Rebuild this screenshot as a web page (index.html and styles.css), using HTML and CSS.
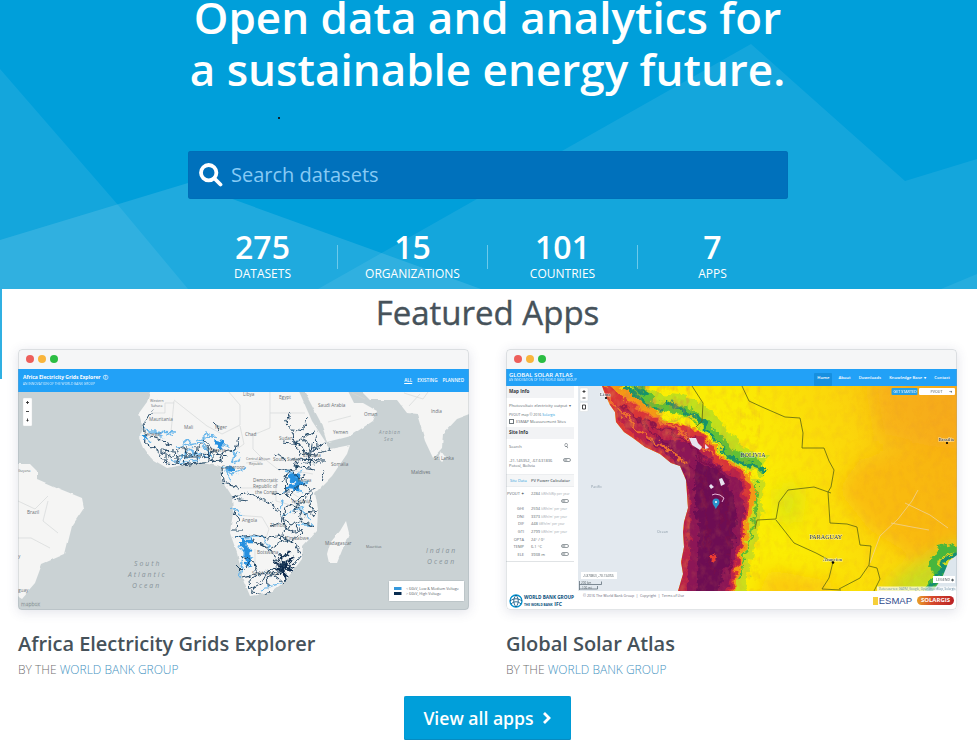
FILE: index.html
```html
<!DOCTYPE html>
<html lang="en">
<head>
<meta charset="utf-8">
<title>Open data and analytics for a sustainable energy future</title>
<link rel="stylesheet" href="styles.css">
</head>
<body>
<header class="hero">
  <svg class="hero-bg" viewBox="0 0 977 289" aria-hidden="true">
    <path class="facet" d="M0 69L118 205 188 289H0z"/>
    <path class="facet facet-b" d="M0 240L188 183 481 289H0z"/>
    <path class="facet" d="M751 44L318 289H977V159L905 181z"/>
    <path class="facet" d="M941 289L977 274V289z"/>
  </svg>
  <i class="speck"></i>
  <h1>Open data and analytics for<br>a sustainable energy future.</h1>
  <div class="search">
    <svg viewBox="0 0 24 24" width="24" height="24"><circle cx="9.7" cy="9.7" r="7.7"/><path d="M15.5 15.5l6 6"/></svg>
    <span>Search datasets</span>
  </div>
  <ul class="stats">
    <li><b>275</b><span>DATASETS</span></li>
    <li><b>15</b><span>ORGANIZATIONS</span></li>
    <li><b>101</b><span>COUNTRIES</span></li>
    <li><b>7</b><span>APPS</span></li>
  </ul>
</header>
<main>
  <h2>Featured Apps</h2>
  <div class="apps">
    <article>
      <div class="window">
        <div class="chrome"><i class="red"></i><i class="amber"></i><i class="green"></i></div>
        <div class="grid-head">
          <div class="brand"><b>Africa Electricity Grids Explorer &nbsp;ⓘ</b><span>AN INNOVATION OF THE WORLD BANK GROUP</span></div>
          <nav><u>ALL</u><span>EXISTING</span><span>PLANNED</span></nav>
        </div>
        <svg class="map" viewBox="18 391 451 218" width="451" height="218">
          <defs>
            <filter id="rough" x="-5%" y="-5%" width="110%" height="110%"><feTurbulence type="fractalNoise" baseFrequency=".17" numOctaves="3" seed="4"/><feDisplacementMap in="SourceGraphic" scale="7" xChannelSelector="R" yChannelSelector="G"/></filter>
            <filter id="coast"><feTurbulence type="fractalNoise" baseFrequency=".1" numOctaves="2" seed="7"/><feDisplacementMap in="SourceGraphic" scale="3" xChannelSelector="R" yChannelSelector="G"/></filter>
          </defs>
          <rect x="18" y="391" width="451" height="218" fill="#cad2d4"/>
          <g class="land" filter="url(#coast)">
            <path d="M151 388L147 401 139 412 143 428 139 437 143 447 150 457 167 467 177 465 203 461 213 463 223 466 221 478 232 495 233 512 230 532 237 552 243 578 250 595 270 592 283 582 293 570 302 558 303 545 317 530 318 508 315 492 332 475 347 453 350 444 330 448 325 440 312 420 298 388z"/>
            <path d="M303 388L320 420 327 441 350 435 373 420 377 410 363 402 354 402 347 388zM359 388L370 399 397 399 407 412 417 413 425 440 433 457 442 447 443 433 457 418 473 412V388z"/>
            <path d="M14 463H30L37 470 37 478 60 488 82 497 84 507 72 525 65 553 42 563 35 582 22 597 14 592zM346 520L349 532 337 562 329 562 327 553 330 542 340 530zM441 450L446 457 442 461 438 457z"/>
          </g>
          <g class="borders">
            <path d="M174 399L207 425 222 433 240 424V404L228 390M174 400L171 431M270 391V412H305M270 412V427L253 434V448L265 460M152 412L165 412V402H174M240 425L244 443 233 451M181 448L203 446M246 462L266 459 280 470M240 487H262L276 478 276 500 294 505 307 517M235 514L262 516 269 528 264 543 242 541M255 548V565M290 469L313 473M292 492L311 504M18 500L35 508 48 495M48 500L43 520 58 532M18 537L31 537 50 547M420 393L409 405M352 392L365 398M328 421L351 415M404 392L423 398 428 391"/>
          </g>
          <g class="lv" filter="url(#rough)">
            <path d="M141 426L152 430 176 431M152 430L164 437M141 434L150 441M176 446L202 442 205 432 217 438M178 460L190 448 200 458M190 448L208 457M214 443L228 446 220 438M235 447L232 462 240 458M222 466L232 473 244 467M226 470L231 480M285 470L296 473 291 485 310 481M282 493L292 484 304 492M286 468L300 478M285 478L303 470M235 536L262 536 270 548M238 546L253 557M247 540L241 566M243 560L240 577M231 507L243 514M262 588L282 582M300 505L310 520M283 515L304 505M282 499L280 508M297 524L315 524M155 431L173 434M181 444L188 438 193 446M180 453L186 457 193 452M196 440L205 437 213 434M203 444L212 456M171 458L180 462 197 459M233 454L240 451M231 468L239 473"/>
            <path class="heavy" d="M215 442L223 444M223 438L220 447M289 475L298 475 297 487 288 486M241 543L251 551M246 548L249 565M143 433L146 439M291 479L303 482M226 467L234 469M241 540L253 540"/>
          </g>
          <g class="hv" filter="url(#rough)">
            <path d="M153 408L143 425 145 434 161 439 173 444M144 440L158 451 167 462 183 464 203 461 220 460 223 451 235 449 238 437M156 449L172 456 180 445 192 455 203 442 211 451 221 453M166 447V460M178 450L176 463M187 447L185 463M197 445L196 462M207 445L208 460M214 448L214 462M176 455L201 455 218 449M203 438L213 449M203 456L218 460 228 454M160 449L174 450M213 420L219 430"/>
            <path d="M291 412L286 421 296 432 306 424 308 417M293 431L294 442 304 437 310 449 317 446 316 434M294 442L300 452 316 454 330 447M301 453L294 465 315 468M307 448L311 468M293 458L325 459M306 454L325 443M299 443L314 461M274 454L285 458M278 466L291 470 297 465M283 441L301 443M310 455L313 440M301 436L314 431M302 461L320 462"/>
            <path d="M222 467L223 480 233 484M222 482L240 487M231 496L248 492 260 497 273 503 280 515 286 528M233 498L248 500M234 510L239 518 235 527M231 529H242M235 536L253 534 268 537 281 534M286 476L287 494 296 502 303 495 315 488M289 494L303 481 312 493 310 505 316 514M284 516L289 502 302 508 299 520 315 526M281 516L292 523 302 518 313 508M290 524L280 538 295 543 302 554 294 564M294 522L301 532 291 541 278 533M282 540L270 548 253 540M270 549L277 560 288 552M240 554L253 560 259 574 249 578 250 591 268 593M259 574L270 568 285 570M250 588L262 581 270 567M269 593L267 577 284 567M284 582L269 570M237 565L243 571 249 561M242 577L257 573M317 509L303 514M282 481L291 468 299 479 306 474M324 469L321 480M271 492L286 493M298 500L294 514M308 494L298 506M271 525L282 521 290 531 302 528M286 538L300 546"/>
            <path class="heavy" d="M275 562L291 570 281 557 291 551M278 556L284 572 292 560 276 568M273 570L294 563M281 553L286 580M274 560L294 568M277 575L291 557M283 562L295 555M276 565L288 576"/>
          </g>
          <g class="place">
            <text x="150" y="401" class="xs">Western</text><text x="151" y="406" class="xs">Sahara</text><text x="149" y="420">Mauritania</text><text x="184" y="428">Mali</text><text x="215" y="428">Niger</text><text x="245" y="435">Chad</text><text x="243" y="395">Libya</text><text x="279" y="398">Egypt</text><text x="318" y="406">Saudi Arabia</text><text x="364" y="415">Oman</text><text x="333" y="433">Yemen</text><text x="279" y="439">Sudan</text><text x="273" y="460">South Sudan</text><text x="303" y="456">Ethiopia</text><text x="331" y="465">Somalia</text><text x="222" y="468">Cameroon</text><text x="210" y="451">Nigeria</text><text x="144" y="435">Senegal</text><text x="253" y="481">Democratic</text><text x="253" y="487">Republic of</text><text x="255" y="493">the Congo</text><text x="246" y="459" class="xs">Central African</text><text x="249" y="464" class="xs">Republic</text><text x="242" y="521">Angola</text><text x="27" y="513">Brazil</text><text x="18" y="557">y</text><text x="18" y="591">guay</text><text x="18" y="471" class="xs">Guyana</text><text x="291" y="502">Tanzania</text><text x="298" y="481">Kenya</text><text x="270" y="526">Zambia</text><text x="286" y="539">Zimbabwe</text><text x="257" y="553">Botswana</text><text x="252" y="574">South Africa</text><text x="325" y="544">Madagascar</text><text x="366" y="547" class="xs">Mauritius</text><text x="431" y="412">India</text><text x="434" y="459">Sri Lanka</text><text x="411" y="473">Maldives</text>
          </g>
          <g class="sea"><text x="379" y="433" class="small">Arabian</text><text x="384" y="440" class="small">Sea</text><text x="134" y="565">South</text><text x="128" y="576">Atlantic</text><text x="132" y="587">Ocean</text><text x="426" y="552">Indian</text><text x="427" y="563">Ocean</text></g>
          <g class="zoomer"><rect x="23" y="397" width="9" height="28" rx="1"/><path d="M26 401.500H29M27.500 400V403M26 410.500H29M27.500 417.500v3M26.500 419.500h2"/></g>
          <text x="21" y="605" class="mapbox">mapbox</text>
          <g><rect x="388.500" y="579.500" width="76" height="21" fill="#fff" stroke="#bcc5c8" rx="1"/><path d="M394 587.500h7.500" stroke="#3598dc" stroke-width="3"/><path d="M394 592.500h7.500" stroke="#082c50" stroke-width="3"/><text x="406" y="589" class="legend">&lt; 66kV, Low &amp; Medium Voltage</text><text x="406" y="594" class="legend">&gt; 66kV, High Voltage</text></g>
        </svg>
      </div>
      <h3>Africa Electricity Grids Explorer</h3>
      <p>BY THE <a>WORLD BANK GROUP</a></p>
    </article>
    <article>
      <div class="window">
        <div class="chrome"><i class="red"></i><i class="amber"></i><i class="green"></i></div>
        <div class="solar-head">
          <div class="brand"><b>GLOBAL SOLAR ATLAS</b><span>AN INNOVATION OF THE WORLD BANK GROUP</span></div>
          <nav><span class="on">Home</span><span>About</span><span>Downloads</span><span>Knowledge Base &nbsp;▾</span><span>Contact</span></nav>
        </div>
        <div class="solar-body">
          <aside>
            <h4>Map Info</h4>
            <div class="info"><div class="select"><span>Photovoltaic electricity output</span><span>▾</span></div><small>PVOUT map © 2016 <a>Solargis</a></small><label><i></i>ESMAP Measurement Sites</label></div>
            <h4>Site Info</h4>
            <div class="site"><div class="find"><span>Search</span><em>⚲</em></div><div class="row"><span>-21.145352, -67.631836</span><i class="toggle"></i></div><span>Potosí, Bolivia</span></div>
            <div class="tabs"><a>Site Data</a><b>PV Power Calculator</b></div>
            <dl>
              <dt>PVOUT ✦</dt><dd>2284 <small>kWh/kWp per year</small></dd><dd class="only"><i class="toggle"></i></dd>
              <dt>GHI</dt><dd>2594 <small>kWh/m² per year</small></dd>
              <dt>DNI</dt><dd>3373 <small>kWh/m² per year</small></dd>
              <dt>DIF</dt><dd>448 <small>kWh/m² per year</small></dd>
              <dt>GTI</dt><dd>2799 <small>kWh/m² per year</small></dd>
              <dt>OPTA</dt><dd>24° / 0°</dd>
              <dt>TEMP</dt><dd>6.1 °C<i class="toggle"></i></dd>
              <dt>ELE</dt><dd>3938 m<i class="toggle"></i></dd>
            </dl>
          </aside>
          <svg class="solar-map" viewBox="578 386 379 205" width="379" height="205">
            <defs>
              <linearGradient id="sun" x1="0" y1=".2" x2="1" y2="0"><stop offset=".42" stop-color="#fbed04"/><stop offset=".68" stop-color="#fbd60b"/><stop offset="1" stop-color="#f5aa18"/></linearGradient>
              <filter id="terrain" x="-5%" y="-5%" width="110%" height="110%"><feTurbulence type="fractalNoise" baseFrequency=".12" numOctaves="4" seed="3" result="n"/><feDisplacementMap in="SourceGraphic" in2="n" scale="12" xChannelSelector="R" yChannelSelector="G"/><feGaussianBlur stdDeviation=".5"/></filter>
              <filter id="soft" x="-20%" y="-20%" width="140%" height="140%"><feGaussianBlur stdDeviation="9"/></filter>
              <filter id="grain" x="0" y="0" width="100%" height="100%"><feTurbulence type="fractalNoise" baseFrequency=".14 .1" numOctaves="4" seed="8"/><feColorMatrix values="0 0 0 0 .72  0 0 0 0 .2  0 0 0 0 .06  1.800 0 0 0 -.8"/></filter>
              <clipPath id="landclip"><path d="M602 386L605 394 610 405 615 412 616 422 624 432 633 438 645 447 660 454 671 463 680 466 683 473 686 480 687 494 688 508 684 522 683 532 684 547 681 562 683 574 678 591H957V386z"/></clipPath>
            </defs>
            <rect x="578" y="386" width="379" height="205" fill="#e3e9ef"/>
            <g clip-path="url(#landclip)">
              <rect x="578" y="386" width="379" height="205" fill="url(#sun)"/>
              <g filter="url(#soft)"><path d="M860 460L970 430V545L920 560 870 530 838 490z" fill="#f8b416" opacity=".75"/><path d="M870 380H970V450L880 440z" fill="#f6a61a" opacity=".6"/><path d="M776 490L802 486 797 522 778 522z" fill="#d2e418" opacity=".8"/><path d="M900 575L960 540V600H880z" fill="#c8dd20"/><path d="M770 570L850 585 820 600H755z" fill="#fbc80c"/></g>
              <rect x="740" y="386" width="217" height="205" filter="url(#grain)" opacity=".13"/>
              <g filter="url(#terrain)" fill="none">
                <path d="M628 383L650 402 690 407 714 427 734 453 764 467" stroke="#c2e01c" stroke-width="19"/>
                <path d="M636 386L652 407 686 410 710 430 730 454 761 466" stroke="#62c134" stroke-width="10"/>
                <path d="M625 385L646 403 648 413 662 409M665 401L691 415 702 420 719 447 737 461 764 470M632 385L646 395" stroke="#15936b" stroke-width="3.800"/>
                <path d="M640 408L670 420 691 416 712 438 728 458" stroke="#d5df16" stroke-width="2.500"/>
                <path d="M757 479L756 514 750 535 743 570 737 596" stroke="#cbdd1c" stroke-width="13"/>
                <path d="M757 482L756 517 747 546 740 579" stroke="#5abc35" stroke-width="2"/>
                <path d="M590 375H612L639 400 669 421 698 428 725 458 750 473 757 490 750 520 742 562 733 606H665L675 478 635 453 596 425z" fill="#f59913"/>
                <path d="M600 380L633 405 666 422 698 430 721 459 746 474 750 492 746 520 739 562 729 606H674L679 480 654 457 623 437 606 418z" fill="#d93438"/>
                <path d="M615 402L640 420 674 430 701 438 716 464 744 477 746 511 740 550 727 604H679L684 504 685 480 664 457 638 438 620 422z" fill="#b9234a"/>
                <path d="M645 438L675 440 693 445 716 465 742 482 743 514 736 553 724 604H685L690 551 689 482 673 459z" fill="#8c1456"/>
                <path d="M696 458L727 478 737 506 732 549 718 594 696 596 699 535 695 495z" fill="#6d1052"/>
                <path d="M620 403L660 440 700 476 713 574M632 415L683 438 726 479 731 575M690 435L705 470 704 551M720 465L722 531" stroke="#76104b" stroke-width="2" opacity=".65"/>
                <path d="M608 397L640 431 683 461M626 402L676 429 714 455" stroke="#f0702f" stroke-width="2"/>
                <path d="M713 554L716 558" stroke="#ed3c31" stroke-width="3"/>
                <path d="M964 546L941 552 933 564 940 577 924 599" stroke="#46b63c" stroke-width="9"/>
                <path d="M964 551L945 560 941 573 930 592" stroke="#148f71" stroke-width="4"/>
              </g>
              <path d="M603 386L610 405 617 423 633 437 660 453 680 465 685 475 687 508 683 532 682 562 678 591 688 591 690 475 665 446 633 420 616 386z" filter="url(#grain)" opacity=".5"/>
              <path d="M602 386L635 386 700 425 760 465 745 591H680L688 474 617 423z" filter="url(#grain)" opacity=".22"/>
              <path d="M957 555L949 561 942 578 933 591H957z" fill="#dde6ed"/>
              <g fill="none" stroke="#efd097" stroke-width=".8"><path d="M870 563L880 536 898 519 912 501 918 490M905 503L930 515 948 528M891 523L912 527 929 530"/></g>
              <g class="frontier"><path d="M692 386L703 403 702 421 696 427M742 386L749 401 762 407 785 417 800 418 803 433 802 448H824L829 461 834 470 831 487 828 492 830 523 847 524 857 527 860 545 871 546 869 565 860 578 839 589M831 493L814 487 788 490 779 502 776 519 757 520 755 529M776 520L794 543 816 553 833 562 829 578 822 589 841 590M869 566L877 568 880 579 874 591"/></g>
              <path d="M689 438L696 438 698 443 702 447 700 450 692 445zM705 444l4 4-4 1zM709 486l2-2 3 3-3 2zM719 479l3-1 3 6-4 2z" fill="#e7e4f0"/><path d="M712 495l3-1 5 1 4 3-2 4" stroke="#e7b4d8" fill="none" stroke-width="1"/>
            </g>
            <path d="M715.800 509C714 505 712.500 504.500 712.500 502a3.500 3.500 0 0 1 7 0c0 2.500-1.500 3-3.700 7z" fill="#2b93cc"/><circle cx="716" cy="502" r="1" fill="#fff"/>
            <g class="nation"><text x="740.500" y="456.500">BOLIVIA</text><text x="809.500" y="538.500">PARAGUAY</text><text x="823" y="560.500" class="city">Asuncion</text><text x="938.500" y="441" class="city">Brasilia</text><text x="600" y="396" class="city">Lima</text></g>
            <circle cx="833" cy="562.500" r="1.300"/><circle cx="947" cy="443" r="1.100"/><circle cx="606" cy="398" r="1.100"/>
            <g class="zoomer"><rect x="580" y="388" width="8" height="13" rx="1"/><rect x="580" y="402.500" width="8" height="9" rx="1"/><path d="M582.500 391.500h3M584 390v3M582.500 398h3M582.500 405h3v4h-3z" fill="none"/></g>
            <g class="tiny"><rect x="891.500" y="388" width="26" height="7" rx="1" fill="#27a0e5"/><text x="893.500" y="393" fill="#fff">GET STARTED</text><rect x="919" y="388" width="36" height="7" rx="1" fill="#fff"/><text x="930.500" y="393">PVOUT &nbsp; &nbsp; &nbsp; ➜</text><rect x="933" y="576" width="22" height="7" fill="#fff"/><text x="936" y="581">LEGEND ◆</text><rect x="877" y="586.500" width="80" height="4.500" fill="#fff" opacity=".7"/><text x="879" y="590" fill="#6c90a5" class="attrib">Data sources: GADM, Google, OpenStreetMap, Solargis</text><rect x="581" y="572" width="36" height="7" fill="#fff"/><text x="583" y="577" class="attrib">-5.878860, -78.134766</text><path d="M579.500 581v9M579.500 584.500h22v-3M579.500 589h18v-3" fill="none" stroke="#52626d" stroke-width=".7"/><text x="581" y="583.500" class="attrib">200 km</text><text x="582" y="588.500" class="attrib">100 mi</text><text x="591" y="488" fill="#8c9ca8">Pacific</text><text x="657" y="533" fill="#8c9ca8">Ocean</text></g>
          </svg>
        </div>
        <footer>
          <svg width="14" height="14" viewBox="0 0 14 14"><circle cx="7" cy="7" r="6" fill="#fff" stroke="#0091cf" stroke-width="1.300"/><path d="M1 7C5 4 9 4 13 7M2 10C5 7 9 7 12 10M7 1C4 5 4 9 7 13M7 1C10 5 10 9 7 13" fill="none" stroke="#064d7a" stroke-width=".8"/></svg>
          <div class="wbg"><b>WORLD BANK GROUP</b><span>THE WORLD BANK &nbsp;<em>IFC</em></span></div>
          <small>© 2016 The World Bank Group &nbsp;| &nbsp;Copyright &nbsp;| &nbsp;Terms of Use</small>
          <i class="square"></i><strong>ESMAP</strong><mark>SOLARGIS</mark>
        </footer>
      </div>
      <h3>Global Solar Atlas</h3>
      <p>BY THE <a>WORLD BANK GROUP</a></p>
    </article>
  </div>
  <a class="button">View all apps <svg width="10" height="14" viewBox="0 0 10 14"><path d="M2 2l5 5-5 5"/></svg></a>
</main>
</body>
</html>
```

FILE: styles.css
```css
* { box-sizing: border-box; }
body { margin: 0; width: 977px; height: 753px; overflow: hidden; background: #fff; font-family: "Open Sans", "Noto Sans", sans-serif; color: #46525a; }
svg { display: block; flex: none; }
.hero { position: relative; height: 289px; background: #009fda; color: #fff; overflow: hidden; display: flex; flex-direction: column; align-items: center; }
.hero-bg { position: absolute; inset: 0; width: 977px; height: 289px; }
.facet { fill: #fff; fill-opacity: .08; }
.facet-b { fill-opacity: .12; }
.speck { position: absolute; left: 278px; top: 117px; width: 2px; height: 2px; background: #10222c; }
h1 { position: relative; margin: -9px 2px 0 0; font-size: 44px; font-weight: 600; line-height: 52px; text-align: center; white-space: nowrap; }
.search { position: relative; flex: none; width: 600px; height: 48px; margin: 56px 1px 0 0; padding: 0 0 1px 11px; display: flex; align-items: center; gap: 8px; background: #0071bc; border-radius: 3px; box-shadow: inset 0 0 1px #005c9c; color: #87caf5; font-size: 20px; }
.search svg { fill: none; stroke: #fff; stroke-width: 3.800; stroke-linecap: round; }
.stats { position: relative; display: flex; width: 600px; margin: 29px 2px 0 0; padding: 0; list-style: none; }
.stats li { position: relative; width: 150px; display: flex; flex-direction: column; align-items: center; }
.stats li + li::before { content: ""; position: absolute; left: -1px; top: 17px; width: 1px; height: 24px; background: #6dc9ea; }
.stats b { font-size: 32px; font-weight: 600; line-height: 38px; }
.stats span { font-size: 12px; line-height: 14px; margin-top: 1px; }
main { height: 464px; position: relative; display: flex; flex-direction: column; align-items: center; }
main::before { content: ""; position: absolute; left: 0; top: 0; width: 2px; height: 90px; background: #30b0e2; }
h2 { margin: 1px 2px 0 0; font-size: 33px; line-height: 45px; font-weight: 400; -webkit-text-stroke: .4px currentColor; }
.apps { display: grid; grid-template-columns: 451px 451px; column-gap: 37px; width: 977px; padding: 14px 0 0 18px; }
.window { position: relative; height: 261px; border-radius: 4px; overflow: hidden; box-shadow: 0 2px 12px rgba(55, 60, 110, .15); background: #fff; }
.window::after { content: ""; position: absolute; inset: 0; border: 1px solid rgba(150, 160, 170, .28); border-radius: 4px; }
.chrome { height: 20px; display: flex; align-items: center; gap: 4px; padding-left: 8px; background: #f5f6f7; }
.chrome i { width: 8px; height: 8px; border-radius: 50%; }
.red { background: #ed5f5b; }
.amber { background: #f9b53c; }
.green { background: #2bbd43; }
.grid-head, .solar-head { display: flex; justify-content: space-between; background: #22a1f7; color: #fff; white-space: nowrap; }
.grid-head { height: 23px; padding: 5px 5px 0; }
.brand { display: flex; flex-direction: column; }
.brand b { font-size: 5px; line-height: 7px; }
.brand span { font-size: 3.300px; line-height: 5px; opacity: .8; }
nav { display: flex; font-weight: 600; }
.grid-head nav { gap: 5px; padding-top: 3px; font-size: 4.600px; line-height: 7px; }
.grid-head u { height: 7px; }
.map { width: 451px; height: 218px; }
.land { fill: #f5f5f4; }
.borders { fill: none; stroke: #d6d8d8; stroke-width: .7; }
.lv { fill: none; stroke: #69b6ea; stroke-width: 1.300; }
.hv { fill: none; stroke: #173e5e; stroke-width: .95; }
.lv .heavy { stroke: #2690df; stroke-width: 4.500; }
.hv .heavy { stroke-width: 1.300; stroke: #0b2c4d; }
.place { font-size: 4.700px; fill: #697075; }
.place .xs { font-size: 3.500px; }
.sea { font-size: 6.800px; letter-spacing: 2px; font-style: italic; fill: #889399; }
.sea .small { font-size: 4.600px; letter-spacing: .8px; }
.zoomer rect { fill: #fff; stroke: #d5d9da; stroke-width: .4; }
.zoomer path { stroke: #333; stroke-width: .9; }
.mapbox { font-size: 5px; fill: #fff; stroke: #8f999d; stroke-width: .35; }
.legend { font-size: 3.700px; fill: #59646a; }
.solar-head { height: 17px; padding: 3px 3px 0; }
.solar-head .brand b { font-size: 6px; font-weight: 600; }
.solar-head .brand span { font-size: 3.100px; line-height: 3px; }
.solar-head nav { font-size: 4.200px; line-height: 9px; gap: 8px; padding: 1px 4px 0 0; }
.solar-head .on { background: #168fdf; padding: 0 3px; margin-right: -2px; border-radius: 1px; }
.solar-body { display: flex; height: 205px; }
aside { width: 72px; padding-right: 4px; font-size: 4px; line-height: 5px; color: #606970; background: #fff; white-space: nowrap; overflow: hidden; }
aside h4 { margin: 0; height: 12px; padding-left: 3px; font-size: 4.600px; line-height: 11px; background: #f2f3f5; color: #30363a; }
aside a { color: #279edc; }
.info { height: 29px; padding: 5px 3px 0; }
.select { display: flex; justify-content: space-between; font-size: 4.200px; line-height: 6px; }
.info small { display: block; font-size: 3.500px; margin-top: 3px; }
label { display: flex; align-items: center; gap: 2px; margin-top: 2px; }
label i { width: 5px; height: 5px; border: 1px solid #70787d; }
.site { height: 35px; padding: 5px 3px 0; }
.find, .row { display: flex; justify-content: space-between; }
.find { height: 12px; margin-bottom: 2px; }
.find em { font-size: 6px; width: 8px; height: 8px; text-align: center; transform: rotate(-45deg); }
.toggle { display: inline-block; width: 8px; height: 4px; border: 1px solid #969da1; border-radius: 3px; background: #fff; box-shadow: inset 3px 0 #b9bec1; }
.tabs { display: flex; justify-content: space-between; padding: 0 4px; height: 13px; line-height: 12px; font-size: 4px; border: 1px solid #eceef0; border-width: 1px 0; background: #f5f6f7; }
.tabs b { font-weight: 600; }
dl { margin: 0; height: 75px; padding-top: 4px; display: grid; grid-template-columns: 18px 38px; column-gap: 7px; grid-auto-rows: 7.600px; border-bottom: 1px solid #e0e3e5; }
dt { text-align: right; }
dd { margin: 0; display: flex; align-items: flex-start; gap: 1px; }
dd .toggle { margin-left: auto; flex: none; }
dd.only { grid-column: 2; height: 5px; }
dd small { font-size: 3.300px; color: #a3aaaf; }
.solar-map { width: 379px; height: 205px; }
.frontier { fill: none; stroke: #5a6514; stroke-width: .8; }
.nation { font-family: "Liberation Serif", serif; font-size: 6.100px; fill: #273040; stroke: #fff9; stroke-width: .8; paint-order: stroke; }
.nation .city { font-size: 5px; }
.tiny { font-size: 3.700px; fill: #566066; }
.tiny .attrib { font-size: 3px; }
footer { height: 19px; display: flex; align-items: center; padding: 0 3px; white-space: nowrap; }
.wbg { width: 55px; margin-left: 1px; display: flex; flex-direction: column; color: #064d7a; }
.wbg b { font-size: 4.700px; line-height: 7px; }
.wbg span { font-size: 3.200px; font-weight: 700; line-height: 6px; }
.wbg em { font-size: 5px; font-style: normal; }
footer small { align-self: flex-start; font-size: 3.600px; margin: 2px 0 0 4px; color: #667; }
.square { width: 5px; height: 8px; margin: 0 1px 0 auto; background: #f6cf3a; }
footer strong { font: 9.500px/14px "Liberation Sans", sans-serif; color: #2f4a8b; margin-right: 5px; }
mark { background: linear-gradient(90deg, #e9a029, #d64a2b 40%, #b92025); color: #fff; width: 37px; height: 9px; border-radius: 5px; font-size: 6px; font-weight: 700; line-height: 9px; text-align: center; }
h3 { margin: 20px 0 0; font-size: 20px; line-height: 28px; font-weight: 600; letter-spacing: -.03px; }
p { margin: 3px 0 0; font-size: 12px; line-height: 18px; font-weight: 300; color: #707070; }
p a { color: #4794bf; }
.button { display: flex; align-items: center; justify-content: center; gap: 8px; width: 167px; height: 44px; margin-top: 17px; margin-right: 2px; background: #009fda; border-radius: 2px; box-shadow: inset 0 -1px #078bc0, inset 0 0 1px #087db5; color: #fff; font-size: 17.600px; font-weight: 600; }
.button path { fill: none; stroke: #fff; stroke-width: 2.800; }
```
